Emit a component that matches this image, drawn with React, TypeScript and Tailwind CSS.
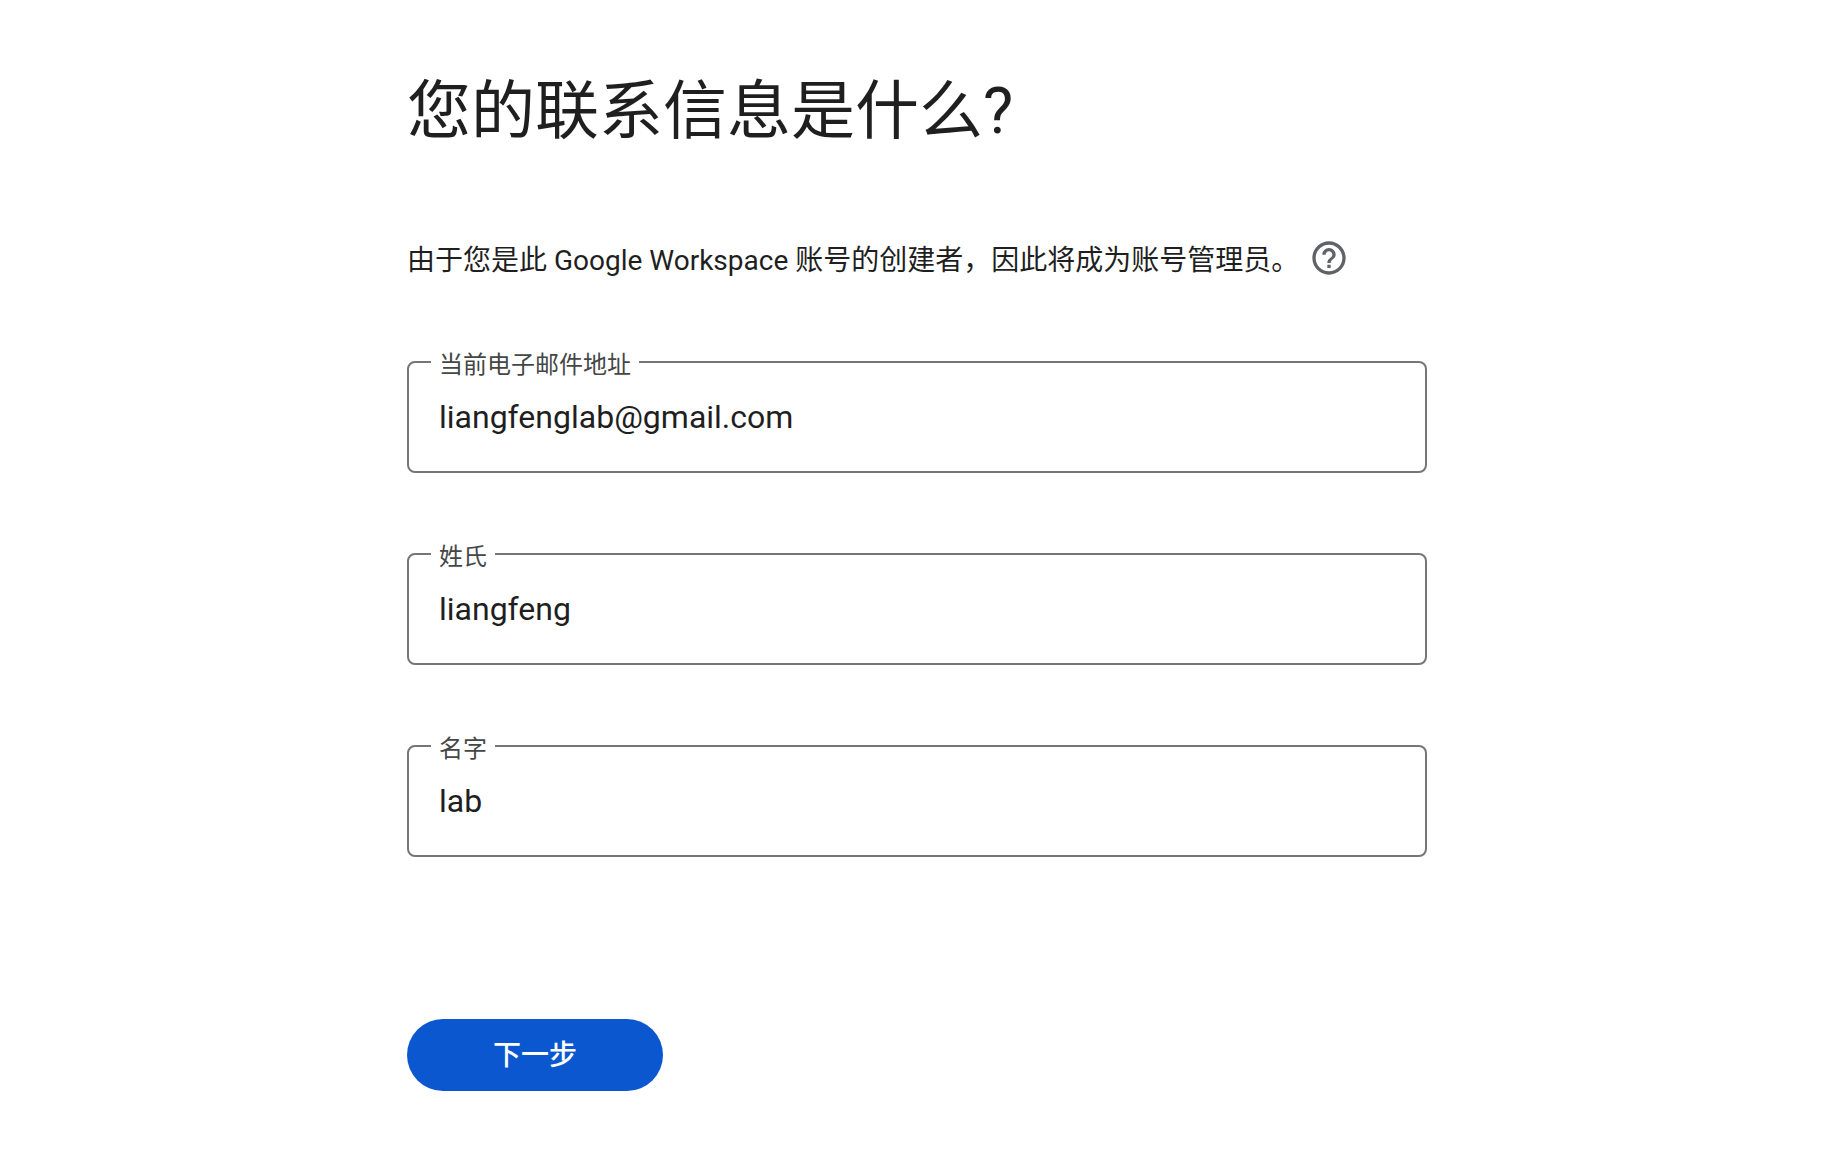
type FieldProps = {
  id: string;
  label: string;
  value: string;
  type?: string;
};

function OutlinedField({ id, label, value, type = "text" }: FieldProps) {
  return (
    <fieldset className="w-full rounded-lg border-2 border-[#747775] pl-[22px] pr-6">
      <legend className="h-6 px-2 text-2xl leading-[30px] text-[#444746]">
        <label htmlFor={id}>{label}</label>
      </legend>
      <input
        id={id}
        type={type}
        defaultValue={value}
        className="block h-[97px] w-full bg-transparent px-2 pb-3 text-[32px] leading-10 text-[#1f1f1f] outline-none"
      />
    </fieldset>
  );
}

function HelpIcon() {
  return (
    <svg viewBox="0 0 24 24" className="size-10" fill="currentColor" aria-hidden="true">
      <path d="M11 18h2v-2h-2v2zm1-16C6.48 2 2 6.48 2 12s4.48 10 10 10 10-4.48 10-10S17.52 2 12 2zm0 18c-4.41 0-8-3.59-8-8s3.59-8 8-8 8 3.59 8 8-3.59 8-8 8zm0-14c-2.21 0-4 1.79-4 4h2c0-1.1.9-2 2-2s2 .9 2 2c0 2-3 1.75-3 5h2c0-2.25 3-2.5 3-5 0-2.21-1.79-4-4-4z" />
    </svg>
  );
}

export default function App() {
  return (
    <div className="min-h-screen bg-white pl-0.5 font-['Roboto','Noto_Sans_CJK_SC',sans-serif] text-[#1f1f1f]">
      <main className="mx-auto max-w-[1020px] pt-18 pb-15">
        <h1 className="text-[64px] leading-20">您的联系信息是什么?</h1>
        <form>
          <div className="mt-[86px] flex h-10 items-center gap-2.5">
            <p className="pt-1.5 text-[28px] leading-9">
              由于您是此 Google Workspace 账号的创建者，因此将成为账号管理员。
            </p>
            <button type="button" aria-label="帮助" className="text-[#5f6368]">
              <HelpIcon />
            </button>
          </div>
          <div className="mt-[72px] flex flex-col gap-[69px]">
            <OutlinedField id="email" label="当前电子邮件地址" value="liangfenglab@gmail.com" type="email" />
            <OutlinedField id="family-name" label="姓氏" value="liangfeng" />
            <OutlinedField id="given-name" label="名字" value="lab" />
          </div>
          <button
            type="button"
            className="mt-[162px] flex h-18 w-64 items-center justify-center rounded-full bg-[#0b57d0] pt-0.5 text-[28px] font-medium text-white"
          >
            下一步
          </button>
        </form>
      </main>
    </div>
  );
}
